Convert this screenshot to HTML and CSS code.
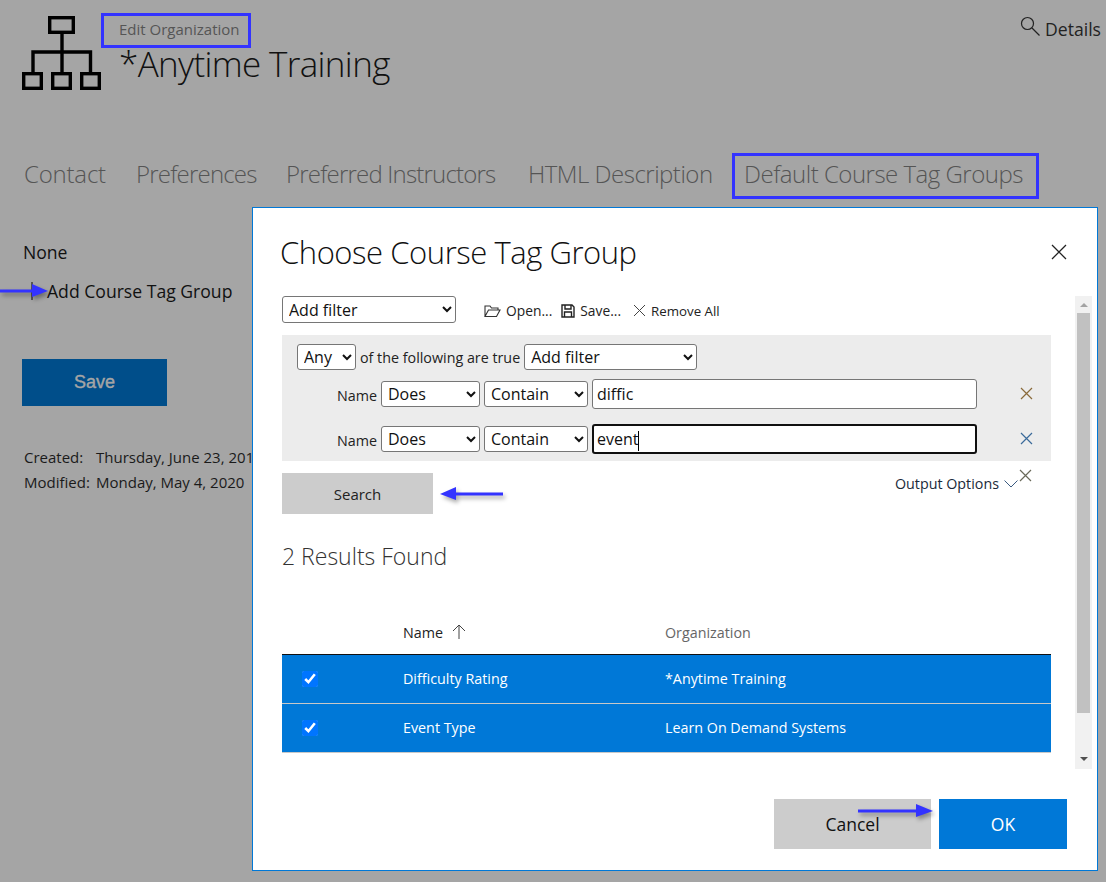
FILE: index.html
```html
<!DOCTYPE html>
<html lang="en">
<head>
  <meta charset="UTF-8" />
  <title>Edit Organization</title>
  <link rel="stylesheet" href="styles.css">
</head>
<body>

  <div class="page">
    <div class="page-head">
      <svg class="org-icon" width="80" height="75" viewBox="0 0 80 75" fill="none" stroke="#000" stroke-width="3.4">
        <rect x="27.7" y="1.7" width="23.6" height="14.6"/>
        <path d="M40 17V56M11 56V36H68.500V56"/>
        <rect x="1.7" y="57.7" width="17.6" height="14.6"/>
        <rect x="30.7" y="57.7" width="17.6" height="14.6"/>
        <rect x="59.7" y="57.7" width="17.6" height="14.6"/>
      </svg>
      <div class="head-text">
        <div class="head-label">Edit Organization</div>
        <h1>*Anytime Training</h1>
      </div>
      <div class="details">
        <svg width="20" height="20" viewBox="0 0 20 20" fill="none" stroke="#222" stroke-width="1.2"><circle cx="7.5" cy="7.5" r="6"/><path d="M12 12l7.5 7.5"/></svg>
        <span>Details</span>
      </div>
    </div>

    <div class="tabs">
      <span class="tab-loose">Contact</span>
      <span class="tab-tight">Preferences</span>
      <span class="tab-tight">Preferred Instructors</span>
      <span>HTML Description</span>
      <span>Default Course Tag Groups</span>
    </div>

    <div class="none-text">None</div>
    <div class="add-link">
      <svg width="18" height="18" viewBox="0 0 18 18" stroke="#222" stroke-width="1.2"><path d="M9 0V18M0 9H18"/></svg>
      <span>Add Course Tag Group</span>
    </div>

    <div class="save-btn">Save</div>

    <div class="meta">
      <span>Created:</span><span>Thursday, June 23, 2016</span>
      <span>Modified:</span><span>Monday, May 4, 2020</span>
    </div>
  </div>

  <div class="modal">
    <div class="modal-head">
      <h2>Choose Course Tag Group</h2>
      <svg class="close-x" width="16" height="16" viewBox="0 0 16 16" stroke="#222" stroke-width="1.3"><path d="M1 1L15 15M15 1L1 15"/></svg>
    </div>

    <div class="modal-scroll">
      <div class="modal-body">
        <div class="toolbar">
          <select class="sel sel-add"><option>Add filter</option></select>
          <span class="tool tool-open">
            <svg width="17" height="14" viewBox="0 0 17 14" fill="none" stroke="#333" stroke-width="1.1"><path d="M1 12.5V2h5l1.5 2H14v2M1 12.5h11.5L16 6H4.500L1 12.5z"/></svg>
            Open...
          </span>
          <span class="tool tool-save">
            <svg width="14" height="14" viewBox="0 0 14 14" fill="none" stroke="#222" stroke-width="1.4"><path d="M1 1H11L13 3V13H1z"/><path d="M4 1V5H10V1M3.500 13V8H10.500V13"/></svg>
            Save...
          </span>
          <span class="tool tool-remove">
            <svg width="13" height="13" viewBox="0 0 13 13" stroke="#444" stroke-width="1"><path d="M1 1L12 12M12 1L1 12"/></svg>
            <small>Remove All</small>
          </span>
        </div>

        <div class="filter-panel">
          <div class="filter-top">
            <select class="sel sel-any"><option>Any</option></select>
            <span>of the following are true</span>
            <select class="sel sel-add2"><option>Add filter</option></select>
          </div>
          <div class="filter-row">
            <span class="filter-name">Name</span>
            <select class="sel sel-does"><option>Does</option></select>
            <select class="sel sel-contain"><option>Contain</option></select>
            <div class="text-input">diffic</div>
            <svg class="row-x" width="13" height="13" viewBox="0 0 13 13" stroke="#8a6a3a" stroke-width="1.200"><path d="M1 1L12 12M12 1L1 12"/></svg>
          </div>
          <div class="filter-row filter-row-2">
            <span class="filter-name">Name</span>
            <select class="sel sel-does"><option>Does</option></select>
            <select class="sel sel-contain"><option>Contain</option></select>
            <div class="text-input focused">event<i class="caret"></i></div>
            <svg class="row-x" width="13" height="13" viewBox="0 0 13 13" stroke="#3a6a9a" stroke-width="1.200"><path d="M1 1L12 12M12 1L1 12"/></svg>
          </div>
        </div>

        <div class="search-row">
          <div class="search-btn">Search</div>
          <div class="output-opts">
            <span>Output Options</span>
            <svg width="14" height="8" viewBox="0 0 14 8" fill="none" stroke="#3a5a80" stroke-width="1"><path d="M0.500 0.500L7 7L13.500 0.500"/></svg>
            <svg class="opts-x" width="13" height="13" viewBox="0 0 13 13" stroke="#6a6a5a" stroke-width="1.200"><path d="M1 1L12 12M12 1L1 12"/></svg>
          </div>
        </div>

        <h3>2 Results Found</h3>

        <table class="results">
          <thead>
            <tr>
              <th class="col-check"></th>
              <th class="col-name">Name <svg width="14" height="15" viewBox="0 0 14 15" fill="none" stroke="#444" stroke-width="1"><path d="M7 15V1M1 7L7 1L13 7"/></svg></th>
              <th class="col-org">Organization</th>
            </tr>
          </thead>
          <tbody>
            <tr>
              <td><input type="checkbox" checked /></td>
              <td>Difficulty Rating</td>
              <td>*Anytime Training</td>
            </tr>
            <tr>
              <td><input type="checkbox" checked /></td>
              <td>Event Type</td>
              <td>Learn On Demand Systems</td>
            </tr>
          </tbody>
        </table>
      </div>

      <div class="scrollbar">
        <div class="arrow-up"></div>
        <div class="thumb"></div>
        <div class="arrow-down"></div>
      </div>
    </div>

    <div class="modal-foot">
      <div class="btn btn-cancel">Cancel</div>
      <div class="btn btn-ok">OK</div>
    </div>
  </div>

  <!-- callouts drawn on top of the screenshot -->
  <div class="callout-box box-edit"></div>
  <div class="callout-box box-tab"></div>

  <svg class="arrow arrow-add" width="52" height="16" viewBox="0 0 52 16"><path d="M0 8H34" stroke="#3333ff" stroke-width="3"/><path d="M32 1L48 8L32 14z" fill="#3333ff"/></svg>
  <svg class="arrow arrow-search" width="66" height="16" viewBox="0 0 66 16"><path d="M14 8H64" stroke="#3333ff" stroke-width="3"/><path d="M1 8L17 1V14z" fill="#3333ff"/></svg>
  <svg class="arrow arrow-ok" width="78" height="16" viewBox="0 0 78 16"><path d="M0 8H60" stroke="#3333ff" stroke-width="3"/><path d="M58 1L75 8L58 14z" fill="#3333ff"/></svg>

</body>
</html>
```

FILE: styles.css
```css
* {
  box-sizing: border-box;
}

html, body {
  margin: 0;
  height: 882px;
  overflow: hidden;
}

body {
  font-family: "Open Sans", Arial, sans-serif;
  background-color: #a5a5a5;
  color: #111;
}

.page {
  padding: 16px 5px 0 22px;
}

.page-head {
  display: flex;
  align-items: flex-start;
  height: 75px;
}

.org-icon {
  flex: none;
}

.head-text {
  margin-left: 17px;
}

.head-label {
  font-size: 15px;
  line-height: 20px;
  color: #555;
  margin-top: 3px;
}

h1 {
  margin: 3px 0 0 0;
  font-size: 35px;
  line-height: 44px;
  font-weight: 300;
  letter-spacing: -0.65px;
  color: #111;
}

.details {
  margin-left: auto;
  display: flex;
  align-items: flex-start;
  gap: 5px;
  font-size: 17.6px;
  line-height: 24px;
  color: #222;
}

.details span {
  margin-top: 1px;
}

.tabs {
  display: grid;
  grid-template-columns: 112px 150px 242px 216px auto;
  margin: 66px 0 0 2px;
  font-size: 24px;
  line-height: 34px;
  font-weight: 300;
  letter-spacing: -0.5px;
  white-space: nowrap;
  color: #555;
}

.tab-loose {
  letter-spacing: -0.2px;
}

.tab-tight {
  letter-spacing: -0.8px;
}

.none-text {
  margin: 49px 0 0 1px;
  font-size: 17.6px;
  line-height: 24px;
}

.add-link {
  display: flex;
  align-items: center;
  gap: 6px;
  margin: 15px 0 0 1px;
  font-size: 17.6px;
  line-height: 24px;
}

.save-btn {
  width: 145px;
  height: 47px;
  margin-top: 56px;
  background-color: #004e8a;
  color: #a5a5a5;
  font-family: "Liberation Sans", Arial, sans-serif;
  -webkit-text-stroke: 0.4px #a5a5a5;
  font-size: 18px;
  line-height: 47px;
  text-align: center;
}

.meta {
  display: grid;
  grid-template-columns: 72px 1fr;
  margin: 39px 0 0 2px;
  font-size: 15px;
  line-height: 25px;
  white-space: nowrap;
  color: #1a1a1a;
}

/* dialog */
.modal {
  position: absolute;
  left: 252px;
  top: 207px;
  width: 846px;
  height: 664px;
  background-color: #fff;
  border: 1px solid #0078d7;
  padding: 0 30px 0 29px;
}

.modal-head {
  display: flex;
  justify-content: space-between;
  align-items: center;
  height: 88px;
}

h2 {
  margin: 0 0 0 -2px;
  font-size: 31px;
  font-weight: 300;
  letter-spacing: -0.45px;
  color: #111;
}

.modal-scroll {
  display: flex;
  height: 473px;
  margin-right: -25px;
}

.modal-body {
  width: 794px;
}

.toolbar {
  display: flex;
  align-items: center;
  height: 27px;
}

.sel {
  height: 26px;
  padding: 0 2px;
  font-family: "Open Sans", Arial, sans-serif;
  font-size: 16px;
  color: #111;
  background-color: #fff;
  border: 1px solid #767676;
  border-radius: 3px;
}

.sel-add {
  width: 174px;
  height: 27px;
}

.tool {
  display: flex;
  align-items: center;
  gap: 5px;
  margin-top: 2px;
  font-size: 13.8px;
  color: #222;
}

.tool small {
  font-size: 13.3px;
}

.tool-open {
  margin-left: 28px;
}

.tool-save {
  margin-left: 9px;
}

.tool-remove {
  margin-left: 12px;
}

.filter-panel {
  width: 769px;
  height: 126px;
  margin-top: 12px;
  padding: 9px 0 0 15px;
  background-color: #ececec;
}

.filter-top {
  display: flex;
  align-items: center;
  gap: 4px;
  font-size: 14.3px;
  color: #222;
}

.sel-any {
  width: 59px;
}

.sel-add2 {
  width: 173px;
}

.filter-row {
  display: flex;
  align-items: center;
  gap: 4px;
  margin-top: 9px;
  font-size: 14.3px;
  color: #222;
}

.filter-row-2 {
  margin-top: 15px;
}

.filter-name {
  width: 80px;
  padding-top: 2px;
  text-align: right;
}

.sel-does {
  width: 99px;
}

.sel-contain {
  width: 104px;
}

.text-input {
  width: 385px;
  height: 30px;
  padding: 0 4px;
  font-size: 16px;
  line-height: 28px;
  color: #111;
  background-color: #fff;
  border: 1px solid #767676;
  border-radius: 3px;
}

.text-input.focused {
  border: 2px solid #101010;
  line-height: 26px;
  padding: 0 3px;
}

.caret {
  display: inline-block;
  width: 1px;
  height: 20px;
  background-color: #000;
  vertical-align: middle;
}

.row-x {
  margin: 0 0 2px 39px;
}

.search-row {
  display: flex;
  justify-content: space-between;
  width: 769px;
  margin-top: 12px;
}

.search-btn {
  width: 151px;
  height: 41px;
  background-color: #ccc;
  font-size: 15px;
  line-height: 43px;
  text-align: center;
  color: #222;
}

.output-opts {
  display: flex;
  align-items: flex-start;
  gap: 5px;
  margin-right: 19px;
  font-size: 14.3px;
  color: #1a2a3a;
}

.output-opts span {
  line-height: 22px;
}

.output-opts svg {
  margin-top: 7px;
}

.output-opts .opts-x {
  margin: -4px 0 0 -4px;
}

h3 {
  margin: 26px 0 0 0;
  font-size: 23px;
  line-height: 32px;
  font-weight: 300;
  color: #333;
}

.results {
  width: 769px;
  margin-top: 39px;
  border-collapse: collapse;
  table-layout: fixed;
  font-size: 14.3px;
}

.results th {
  height: 43px;
  padding: 0;
  font-weight: normal;
  text-align: left;
  border-bottom: 1px solid #111;
}

.col-check {
  width: 121px;
}

.col-name {
  width: 262px;
  color: #222;
}

.col-name svg {
  margin-left: 5px;
  vertical-align: -1px;
}

.col-org {
  color: #666;
}

.results td {
  height: 49px;
  padding: 0;
  color: #fff;
  background-color: #0078d7;
  border-bottom: 1px solid #c8c8c8;
}

.results td:first-child {
  padding-left: 20px;
}

.results input {
  display: block;
  width: 16px;
  height: 16px;
  margin: 0;
}

.scrollbar {
  display: flex;
  flex-direction: column;
  align-items: center;
  width: 17px;
  margin-left: 1px;
  background-color: #f1f1f1;
}

.arrow-up {
  margin-top: 7px;
  border-left: 4px solid transparent;
  border-right: 4px solid transparent;
  border-bottom: 4px solid #a3a3a3;
}

.thumb {
  width: 13px;
  height: 400px;
  margin-top: 6px;
  background-color: #c1c1c1;
}

.arrow-down {
  margin-top: 44px;
  border-left: 4px solid transparent;
  border-right: 4px solid transparent;
  border-top: 4px solid #505050;
}

.modal-foot {
  display: flex;
  justify-content: flex-end;
  gap: 8px;
  margin-top: 30px;
}

.btn {
  height: 50px;
  font-size: 17.5px;
  line-height: 50px;
  text-align: center;
}

.btn-cancel {
  width: 157px;
  background-color: #ccc;
  color: #111;
}

.btn-ok {
  width: 128px;
  background-color: #0078d7;
  color: #fff;
}

/* callouts */
.callout-box {
  position: absolute;
  border: 3px solid #3333ff;
}

.box-edit {
  left: 101px;
  top: 13px;
  width: 150px;
  height: 35px;
}

.box-tab {
  left: 732px;
  top: 153px;
  width: 307px;
  height: 46px;
}

.arrow {
  position: absolute;
  filter: drop-shadow(2px 3px 2px rgba(0, 0, 0, 0.35));
}

.arrow-add {
  left: 0;
  top: 283px;
}

.arrow-search {
  left: 439px;
  top: 486px;
}

.arrow-ok {
  left: 858px;
  top: 803px;
}
```
